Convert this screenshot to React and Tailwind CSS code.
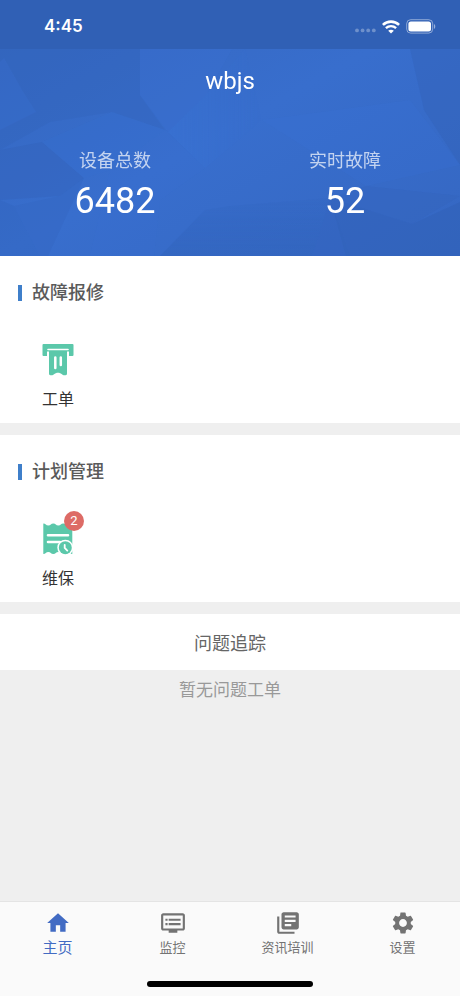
import React from 'react';
import { MdHome, MdDvr, MdLibraryBooks, MdSettings } from 'react-icons/md';

const stats = [
    { label: '设备总数', value: 6482 },
    { label: '实时故障', value: 52 },
];

const tabs = [
    { label: '主页', icon: MdHome, active: true },
    { label: '监控', icon: MdDvr },
    { label: '资讯培训', icon: MdLibraryBooks },
    { label: '设置', icon: MdSettings },
];

// Low-poly pattern behind the header
function HeaderBackground() {
    return (
        <svg className="absolute inset-0 h-full w-full" viewBox="0 0 460 256" preserveAspectRatio="none" aria-hidden="true">
            <defs>
                <linearGradient id="base" x1="0" y1="0" x2="1" y2="1">
                    <stop offset="0" stopColor="#3466be" />
                    <stop offset="0.5" stopColor="#386ecd" />
                    <stop offset="1" stopColor="#3567c2" />
                </linearGradient>
                <linearGradient id="fadeDown" x1="0" y1="0" x2="0" y2="1">
                    <stop offset="0" stopColor="#2c5cae" stopOpacity="0.1" />
                    <stop offset="1" stopColor="#2c5cae" stopOpacity="0.4" />
                </linearGradient>
                <linearGradient id="fadeRight" x1="0" y1="0" x2="1" y2="0">
                    <stop offset="0" stopColor="#3a74d6" stopOpacity="0.7" />
                    <stop offset="1" stopColor="#3a74d6" stopOpacity="0" />
                </linearGradient>
            </defs>
            <rect width="460" height="256" fill="url(#base)" />
            <g opacity="0.65">
                <path d="M0 49H140V95L165 130 112 112 50 122 0 150Z" fill="#3363b9" opacity="0.5" />
                <path d="M0 62 4 58 22 90 36 112 0 130Z" fill="#3a74d6" opacity="0.35" />
                <path d="M140 49H232L206 95 168 132 140 95Z" fill="#3a6fd0" opacity="0.7" />
                <path d="M168 132 206 95 245 49 262 120 205 168Z" fill="url(#fadeRight)" />
                <path d="M0 150 42 142 84 178 60 196 0 200Z" fill="#3160b6" opacity="0.5" />
                <path d="M42 142 112 112 165 130 110 170 84 178Z" fill="#3a72d2" opacity="0.35" />
                <path d="M0 200 14 206 40 256H0Z" fill="#2f5fb5" opacity="0.35" />
                <path d="M14 206 60 196 84 178 48 256H40Z" fill="#3160b6" opacity="0.3" />
                <path d="M165 130 205 168 160 200 154 256H90L110 170Z" fill="#3a72d2" opacity="0.25" />
                <path d="M205 210 230 206 330 198 312 256H160Z" fill="url(#fadeDown)" />
                <path d="M410 49H460V165L424 110Z" fill="#3160b4" opacity="0.5" />
                <path d="M330 198 366 186 460 196 412 224Z" fill="#3463ba" opacity="0.55" />
                <path d="M412 224 460 202V256H346L330 198Z" fill="#2f5db2" opacity="0.5" />
                <path d="M330 198 312 256H350Z" fill="#3160b6" opacity="0.45" />
                <path d="M262 120 410 100 460 165 366 186Z" fill="#3a73d6" opacity="0.3" />
            </g>
        </svg>
    );
}

function StatusBar() {
    return (
        <div className="relative flex h-[49px] items-center justify-between bg-[#3060b5] pr-6 pl-11 pt-1 text-white">
            <span className="font-['Inter',sans-serif] text-[17px] font-semibold">4:45</span>
            <div className="flex items-center gap-1.5">
                <svg width="22" height="18" viewBox="0 0 22 18" fill="#fff" fillOpacity="0.3" aria-hidden="true">
                    <circle cx="3" cy="12.4" r="1.9" />
                    <circle cx="8.6" cy="12.4" r="1.9" />
                    <circle cx="14.2" cy="12.4" r="1.9" />
                    <circle cx="19.8" cy="12.4" r="1.9" />
                </svg>
                <svg width="18" height="14" viewBox="0 0 18 14" fill="none" stroke="#fff" aria-hidden="true">
                    <path d="M.9 4.9C5.5.5 12.5.5 17.1 4.9" strokeWidth="2.6" />
                    <path d="M3.9 8.1c2.9-2.7 7.3-2.7 10.200 0" strokeWidth="2.4" />
                    <path d="M9 13.6 6.2 10.8c1.6-1.4 4-1.4 5.6 0Z" fill="#fff" stroke="none" />
                </svg>
                <svg width="30" height="15" viewBox="0 0 30 15" aria-hidden="true">
                    <rect x="0.7" y="0.7" width="26" height="13.4" rx="4" fill="none" stroke="#fff" strokeOpacity="0.45" />
                    <rect x="2.4" y="2.4" width="22.6" height="10" rx="2.5" fill="#fff" />
                    <path d="M28 5v5c1.7-.8 1.7-4.2 0-5Z" fill="#fff" fillOpacity="0.5" />
                </svg>
            </div>
        </div>
    );
}

function WorkOrderIcon() {
    return (
        <svg width="32" height="34" viewBox="0 0 32 34" aria-hidden="true">
            <path d="M1.5 1h29a1 1 0 0 1 1 1v10a1 1 0 0 1-1 1H27V8.500H5V13H1.500a1 1 0 0 1-1-1V2a1 1 0 0 1 1-1Z" fill="#5bc8aa" />
            <path d="M6 6.5h20" stroke="#fff" strokeWidth="1.6" strokeLinecap="round" />
            <path d="M7 8h18v22.5c0 1.500-1 1.800-2.500 1.800-2.300 0-3.300-2.600-6.500-2.600s-4.200 2.600-6.500 2.600C8 32.300 7 32 7 30.500Z" fill="#5bc8aa" />
            <path d="M13.300 14.500V25M18.800 14.500v7.500" stroke="#fff" strokeWidth="2.500" strokeLinecap="round" />
        </svg>
    );
}

function MaintenanceIcon() {
    return (
        <svg width="32" height="34" viewBox="0 0 32 34" aria-hidden="true">
            <path d="M1.300 1.500c2.500 0 2.500 2 5 2s2.500-2 5-2 2.500 2 5 2 2.500-2 5-2 2.500 2 4.500 2 2-2 4.500-2V32c-2.500 0-2.500-2-4.500-2s-2 2-4.500 2-2.500-2-5-2-2.500 2-5 2-2.500-2-5-2-2.500 2-5 2Z" fill="#5bc8aa" />
            <path d="M6 13.200h20M6 20h12" stroke="#fff" strokeWidth="2.600" strokeLinecap="round" />
            <circle cx="23.300" cy="25.700" r="8" fill="#fff" />
            <circle cx="23.300" cy="25.700" r="6.500" fill="#5bc8aa" />
            <path d="M22.700 22.800V26l2.600 2.600" fill="none" stroke="#fff" strokeWidth="1.800" strokeLinecap="round" />
        </svg>
    );
}

function Section({ title, label, icon, badge }) {
    return (
        <section className="bg-white px-[18px] pt-6 pb-[11px]">
            <h2 className="flex items-center gap-2.5 text-lg leading-[26px] font-medium text-[#5a5a5a]">
                <span className="h-4 w-1 bg-[#3f7fca]" />
                {title}
            </h2>
            <a href="#" className="mt-9 ml-4 flex w-12 flex-col items-center gap-2.5 text-base text-[#333]">
                <span className="relative flex h-9 items-center">
                    {icon}
                    {badge && (
                        <span className="absolute -top-2.5 -right-2.5 flex h-5 w-5 items-center justify-center rounded-full bg-[#dd6b66] text-[13px] text-white">
                            {badge}
                        </span>
                    )}
                </span>
                {label}
            </a>
        </section>
    );
}

function App() {
    return (
        <div className="flex min-h-screen flex-col bg-[#efefef] font-['Roboto','Noto_Sans_CJK_SC',sans-serif]">
            <header className="relative h-64 text-white">
                <HeaderBackground />
                <StatusBar />
                <h1 className="relative pt-4 text-center text-2xl leading-8">wbjs</h1>
                <dl className="relative mt-[50px] flex">
                    {stats.map((stat) => (
                        <div key={stat.label} className="flex-1 text-center">
                            <dt className="text-lg leading-7 text-white/70">{stat.label}</dt>
                            <dd className="mt-0.5 text-4xl leading-12">{stat.value}</dd>
                        </div>
                    ))}
                </dl>
            </header>

            <main className="flex flex-1 flex-col gap-3">
                <Section title="故障报修" label="工单" icon={<WorkOrderIcon />} />
                <Section title="计划管理" label="维保" icon={<MaintenanceIcon />} badge={2} />
                <section>
                    <h2 className="bg-white pt-4 pb-3 text-center text-lg leading-7 text-[#666]">问题追踪</h2>
                    <p className="pt-1.5 text-center text-[17px] leading-7 text-[#999]">暂无问题工单</p>
                </section>
            </main>

            <nav className="border-t border-[#e4e4e4] bg-[#fafafa] pt-2 pb-[9px]">
                <div className="flex">
                    {tabs.map(({ label, icon: Icon, active }) => (
                        <a key={label} href="#" className={`flex flex-1 flex-col items-center ${active ? 'text-[15px] text-[#426bc3]' : 'text-[13px] text-[#737373]'}`}>
                            <Icon size={26} />
                            <span className="leading-6">{label}</span>
                        </a>
                    ))}
                </div>
                <div className="mx-auto mt-[21px] h-1.5 w-[36%] rounded-full bg-black" />
            </nav>
        </div>
    );
}

export default App;
